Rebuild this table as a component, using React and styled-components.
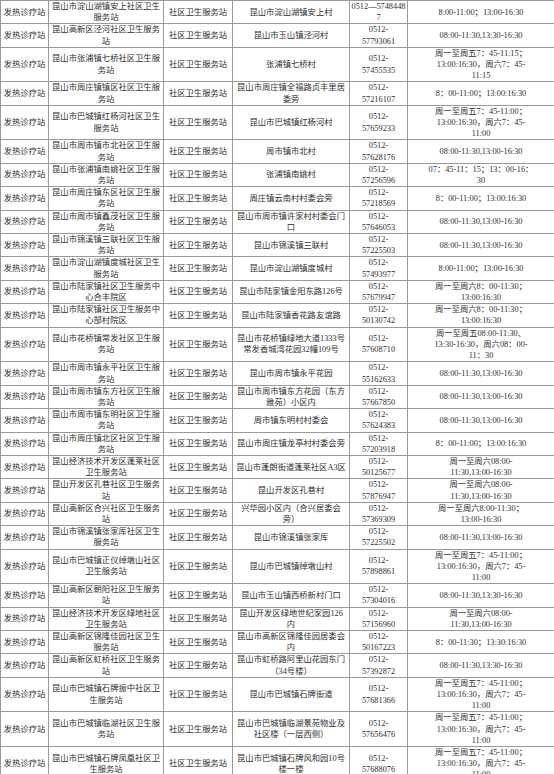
import React from "react";
import styled, { createGlobalStyle } from "styled-components";

const GlobalStyle = createGlobalStyle`
  html, body { margin: 0; padding: 0; background: #ffffff; }
  #root { width: 554px; }
`;

const T1 = ["周一至周五7：45-11:00；", "13:00:16:30，周六7：45-", "11:00"];

const rows = [
  [["昆山市淀山湖镇安上社区卫生", "服务站"], ["昆山市淀山湖镇安上村"], ["0512—5748448", "7"], ["8:00-11:00；13:00-16:30"]],
  [["昆山高新区泾河社区卫生服务", "站"], ["昆山市玉山镇泾河村"], ["0512-", "57793061"], ["08:00-11:30,13:30-16:30"]],
  [["昆山市张浦镇七桥社区卫生服", "务站"], ["张浦镇七桥村"], ["0512-", "57455535"], ["周一至周五7：45-11:15；", "13:00:16:30，周六7：45-", "11:15"]],
  [["昆山市周庄镇镇区社区卫生服", "务站"], ["昆山市周庄镇全福路贞丰里居", "委旁"], ["0512-", "57216107"], ["8：00-11:00；13:00:16:30"]],
  [["昆山市巴城镇红杨河社区卫生", "服务站"], ["昆山市巴城镇红杨河村"], ["0512-", "57659233"], T1],
  [["昆山市周市镇市北社区卫生服", "务站"], ["周市镇市北村"], ["0512-", "57628176"], ["08:00-11:30,13:00-16:30"]],
  [["昆山市张浦镇南姚社区卫生服", "务站"], ["张浦镇南姚村"], ["0512-", "57256596"], ["07：45-11：15；13：00-16：", "30"]],
  [["昆山市周庄镇东区社区卫生服", "务站"], ["周庄镇云南村村委会旁"], ["0512-", "57218569"], ["8：00-11:00；13:00:16:30"]],
  [["昆山市周市镇鑫茂社区卫生服", "务站"], ["昆山市周市镇许家村村委会门", "口"], ["0512-", "57646053"], ["08:00-11:30,13:00-16:30"]],
  [["昆山市锦溪镇三联社区卫生服", "务站"], ["昆山市锦溪镇三联村"], ["0512-", "57225503"], ["08:00-11:30,13:00-16:30"]],
  [["昆山市淀山湖镇度城社区卫生", "服务站"], ["昆山市淀山湖镇度城村"], ["0512-", "57493977"], ["8:00-11:00；13:00-16:30"]],
  [["昆山市陆家镇社区卫生服务中", "心合丰院区"], ["昆山市陆家镇金阳东路126号"], ["0512-", "57679947"], ["周一至周六8：00-11:30；", "13:00:16:30"]],
  [["昆山市陆家镇社区卫生服务中", "心郜村院区"], ["昆山市陆家镇香花路友谊路"], ["0512-", "50130742"], ["周一至周六8：00-11:30；", "13:00:16:30"]],
  [["昆山市花桥镇常发社区卫生服", "务站"], ["昆山市花桥镇绿地大道1333号", "常发香城湾花园32幢109号"], ["0512-", "57608710"], ["周一至周五08:00-11:30、", "13:30-16:30，周六08：00-", "11：30"]],
  [["昆山市周市镇永平社区卫生服", "务站"], ["昆山市周市镇永平花园"], ["0512-", "55162633"], ["08:00-11:30,13:00-16:30"]],
  [["昆山市周市镇东方社区卫生服", "务站"], ["昆山市周市镇东方花园（东方", "雅苑）小区内"], ["0512-", "57667850"], ["08:00-11:30,13:00-16:30"]],
  [["昆山市周市镇东明社区卫生服", "务站"], ["周市镇东明村村委会"], ["0512-", "57624383"], ["08:00-11:30,13:00-16:30"]],
  [["昆山市周庄镇北区社区卫生服", "务站"], ["昆山市周庄镇龙亭村村委会旁"], ["0512-", "57203918"], ["8：00-11:00；13:00:16:30"]],
  [["昆山经济技术开发区蓬莱社区", "卫生服务站"], ["昆山市蓬朗街道蓬莱社区A3区"], ["0512-", "50125677"], ["周一至周六08:00-", "11:30,13:00-16:30"]],
  [["昆山开发区孔巷社区卫生服务", "站"], ["昆山开发区孔巷村"], ["0512-", "57876947"], ["周一至周六08:00-", "11:30,13:00-16:30"]],
  [["昆山高新区合兴社区卫生服务", "站"], ["兴华园小区内（合兴居委会", "旁）"], ["0512-", "57369309"], ["周一至周六8:00-11:30；", "13:00-16:30"]],
  [["昆山市锦溪镇张家厍社区卫生", "服务站"], ["昆山市锦溪镇张家厍"], ["0512-", "57225502"], ["08:00-11:30,13:00-16:30"]],
  [["昆山市巴城镇正仪绰墩山社区", "卫生服务站"], ["昆山市巴城镇绰墩山村"], ["0512-", "57898861"], T1],
  [["昆山高新区朝阳社区卫生服务", "站"], ["昆山市玉山镇西桥新村门口"], ["0512-", "57304016"], ["08:00-11:30,13:30-16:30"]],
  [["昆山经济技术开发区绿地社区", "卫生服务站"], ["昆山开发区绿地世纪家园126", "内"], ["0512-", "57156960"], ["周一至周六08:00-", "11:30,13:00-16:30"]],
  [["昆山高新区锦隆佳园社区卫生", "服务站"], ["昆山市高新区锦隆佳园居委会", "内"], ["0512-", "50167223"], ["8：00-11:30；13:30:16:30"]],
  [["昆山高新区虹桥社区卫生服务", "站"], ["昆山市虹桥路阿里山花园东门", "（34号楼）"], ["0512-", "57392872"], ["08:00-11:30,13:30-16:30"]],
  [["昆山市巴城镇石牌振中社区卫", "生服务站"], ["昆山市巴城镇石牌街道"], ["0512-", "57681366"], T1],
  [["昆山市巴城镇临湖社区卫生服", "务站"], ["昆山市巴城镇临湖景苑物业及", "社区楼（一层西侧）"], ["0512-", "57656476"], T1],
  [["昆山市巴城镇石牌凤凰社区卫", "生服务站"], ["昆山市巴城镇石牌风和园10号", "楼一楼"], ["0512-", "57688076"], T1],
];

const widths = [48, 115, 69, 117, 58, 147];

const Table = styled.table`
  width: 554px;
  table-layout: fixed;
  border-collapse: collapse;
  font-family: "Liberation Serif", "Noto Sans CJK SC", serif;
  font-size: 8.3px;
  line-height: 11.2px;
  color: #2e2e2e;
`;

const Col = styled.col`
  width: ${(p) => p.$w}px;
`;

const Row = styled.tr`
  height: ${(p) => (p.$tall ? 34 : 22)}px;
`;

const Cell = styled.td`
  border: 1px solid #9a9a9a;
  padding: 0 1px;
  text-align: center;
  vertical-align: middle;
  white-space: nowrap;
  overflow: hidden;
`;

const Lines = ({ lines }) =>
  lines.map((l, i) => (
    <React.Fragment key={i}>
      {i > 0 && <br />}
      {l}
    </React.Fragment>
  ));

export default function App() {
  return (
    <>
      <GlobalStyle />
      <Table>
        <colgroup>
          {widths.map((w, i) => (
            <Col key={i} $w={w} />
          ))}
        </colgroup>
        <tbody>
          {rows.map(([name, addr, phone, time], i) => (
            <Row key={i} $tall={time.length > 2}>
              <Cell>发热诊疗站</Cell>
              <Cell><Lines lines={name} /></Cell>
              <Cell>社区卫生服务站</Cell>
              <Cell><Lines lines={addr} /></Cell>
              <Cell><Lines lines={phone} /></Cell>
              <Cell><Lines lines={time} /></Cell>
            </Row>
          ))}
        </tbody>
      </Table>
    </>
  );
}
